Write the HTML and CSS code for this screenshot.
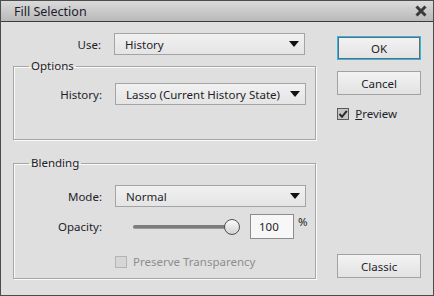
FILE: index.html
```html
<!DOCTYPE html>
<html lang="en">
  <head>
    <meta charset="UTF-8" />
    <title>Fill Selection</title>
    <link rel="stylesheet" href="styles.css">
  </head>
  <body>
    <div class="window">
      <div class="titlebar">
        <span class="title">Fill Selection</span>
        <svg class="close" width="12" height="12" viewBox="0 0 12 12">
          <path d="M1.5 1.5 L10.5 10.5 M10.5 1.5 L1.5 10.5" stroke="#3a3a3a" stroke-width="3" />
        </svg>
      </div>
      <div class="content">
        <div class="main">
          <div class="row use-row">
            <label class="label">Use:</label>
            <div class="select">History<span class="arrow"></span></div>
          </div>

          <fieldset class="group options">
            <legend>Options</legend>
            <div class="row">
              <label class="label">History:</label>
              <div class="select">Lasso (Current History State)<span class="arrow"></span></div>
            </div>
          </fieldset>

          <fieldset class="group blending">
            <legend>Blending</legend>
            <div class="row">
              <label class="label">Mode:</label>
              <div class="select">Normal<span class="arrow"></span></div>
            </div>
            <div class="row opacity-row">
              <label class="label">Opacity:</label>
              <div class="slider">
                <div class="track"></div>
                <div class="thumb"></div>
              </div>
              <div class="num">100</div>
              <span class="pct">%</span>
            </div>
            <div class="row check-row">
              <span class="label"></span>
              <span class="check disabled"></span>
              <span class="check-text disabled-text">Preserve Transparency</span>
            </div>
          </fieldset>
        </div>

        <div class="side">
          <button class="btn ok">OK</button>
          <button class="btn">Cancel</button>
          <div class="preview">
            <span class="check checked">
              <svg width="10" height="10" viewBox="0 0 10 10">
                <path d="M1.5 5 L4 7.8 L8.8 1.8" fill="none" stroke="#2a2a2a" stroke-width="2" />
              </svg>
            </span>
            <span class="check-text"><u>P</u>review</span>
          </div>
          <div class="spacer"></div>
          <button class="btn classic">Classic</button>
        </div>
      </div>
    </div>
  </body>
</html>
```
FILE: styles.css
```css
* {
  margin: 0;
  padding: 0;
  box-sizing: border-box;
}
body {
  font-family: "Noto Sans", "Open Sans", sans-serif;
  font-size: 11.5px;
  color: #1e1e28;
  background: #dfdfdf;
}
.window {
  width: 434px;
  height: 296px;
  border: 1px solid #4c4c4c;
  background: #dfdfdf;
  display: flex;
  flex-direction: column;
}
.titlebar {
  height: 21px;
  background: linear-gradient(#dadada, #b9b9b9);
  border-bottom: 1px solid #3c3c3c;
  display: flex;
  align-items: center;
  justify-content: space-between;
  padding: 0 6px 0 13px;
}
.title {
  font-size: 12.5px;
  color: #1c1c2c;
}
.content {
  flex: 1;
  display: flex;
  padding: 11px 12px 0 12px;
}
.main {
  width: 304px;
}
.row {
  display: flex;
  align-items: center;
}
.label {
  width: 88px;
  text-align: right;
  margin-right: 13px;
}
.select {
  width: 191px;
  height: 22px;
  border: 1px solid #a4a4a4;
  background: linear-gradient(#f1f1f1, #e4e4e4);
  display: flex;
  align-items: center;
  justify-content: space-between;
  padding: 0 5px 0 10px;
}
.arrow {
  width: 0;
  height: 0;
  border-left: 5px solid transparent;
  border-right: 5px solid transparent;
  border-top: 6px solid #111;
}
.group {
  border: 1px solid #a6a6a6;
  box-shadow: 1px 1px 0 #fafafa, inset 1px 1px 0 #fafafa;
}
.group legend {
  margin-left: 15px;
  padding: 0 2px;
  line-height: 16px;
}
.options {
  margin-top: 3px;
  height: 82px;
  padding: 9px 0 0 0;
}
.blending {
  margin-top: 15px;
  height: 124px;
  padding: 14px 0 0 0;
}
.opacity-row {
  margin-top: 7px;
}
.slider {
  position: relative;
  width: 108px;
  height: 16px;
  margin-left: 18px;
}
.track {
  position: absolute;
  left: 0;
  top: 6px;
  width: 100px;
  height: 4px;
  border-radius: 2px;
  background: #7c7c7c;
  border-bottom: 1px solid #9a9a9a;
}
.thumb {
  position: absolute;
  left: 91px;
  top: 0;
  width: 16px;
  height: 16px;
  border-radius: 50%;
  border: 1px solid #505050;
  background: linear-gradient(#fbfbfb, #d2d2d2);
}
.num {
  width: 44px;
  height: 25px;
  margin-left: 9px;
  border: 1px solid #8c8c8c;
  background: #f7f7f7;
  padding: 4px 0 0 8px;
}
.pct {
  margin-left: 4px;
  align-self: flex-start;
}
.check-row {
  margin-top: 15px;
}
.check {
  width: 12px;
  height: 12px;
  border: 1px solid #5a5a5a;
  background: #c6c6c6;
  display: flex;
  align-items: center;
  justify-content: center;
}
.check.disabled {
  border-color: #b4b4b4;
  background: #d6d6d6;
}
.check-text {
  margin-left: 6px;
}
.disabled-text {
  color: #8e8e8e;
}
.side {
  margin-left: 21px;
  width: 84px;
  display: flex;
  flex-direction: column;
  padding-top: 3px;
  padding-bottom: 17px;
}
.btn {
  height: 24px;
  font: inherit;
  color: inherit;
  border: 1px solid #a2a2a2;
  background: linear-gradient(#f3f3f3, #e2e2e2);
  margin-bottom: 11px;
}
.ok {
  border: 1px solid #2cb8ea;
  box-shadow: inset 0 0 0 1px #6a6a6a;
}
.preview {
  display: flex;
  align-items: center;
}
.spacer {
  flex: 1;
}
.classic {
  margin-bottom: 0;
}
```
